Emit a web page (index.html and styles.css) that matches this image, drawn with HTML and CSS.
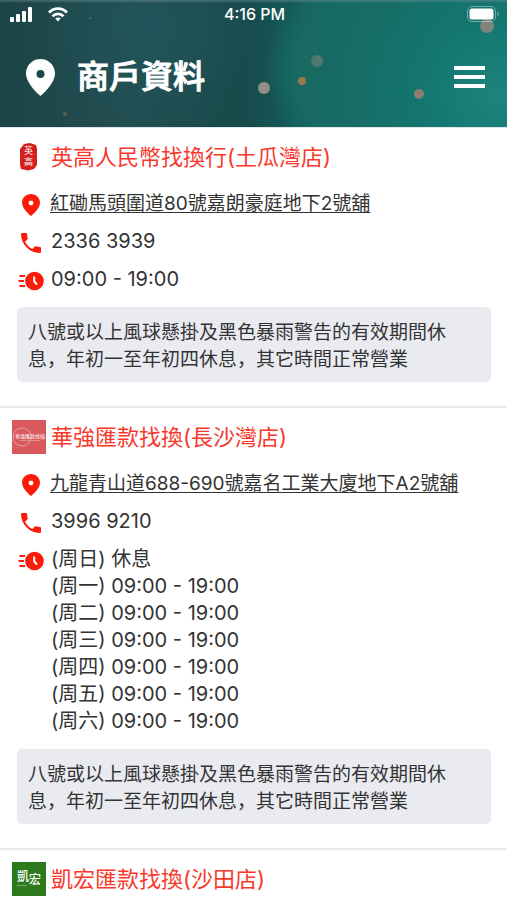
FILE: index.html
```html
<!DOCTYPE html>
<html lang="zh-CN">
<head>
  <meta charset="UTF-8">
  <meta name="viewport" content="width=device-width, initial-scale=1.0">
  <title>商戶資料</title>
  <link rel="stylesheet" href="styles.css">
</head>
<body>

<!-- shared icons -->
<svg class="sprite" aria-hidden="true">
  <symbol id="pin" viewBox="0 0 18 22">
    <path fill-rule="evenodd" d="M9 0C4 0 0 3.900 0 8.800 0 15.200 9 22 9 22s9-6.800 9-13.200C18 3.900 14 0 9 0zM9 6.600a2.400 2.400 0 1 1 0 4.800 2.400 2.400 0 0 1 0-4.800z"/>
  </symbol>
  <symbol id="phone" viewBox="3 3 18 18">
    <path d="M6.620 10.790c1.440 2.830 3.760 5.140 6.590 6.590l2.200-2.200c.27-.27.67-.36 1.020-.24 1.120.37 2.330.57 3.570.57.55 0 1 .45 1 1V20c0 .55-.45 1-1 1-9.390 0-17-7.610-17-17 0-.55.45-1 1-1h3.500c.55 0 1 .45 1 1 0 1.250.2 2.450.57 3.570.11.35.03.74-.25 1.020l-2.200 2.200z"/>
  </symbol>
  <symbol id="clock" viewBox="0 0 26 20">
    <circle cx="16.500" cy="10" r="9.300"/>
    <path d="M1.500 5H7M0.500 10H6M1.500 15H7" stroke="#fb1b0b" stroke-width="1.800"/>
    <path d="M16.200 5.500V10.500L19 13.500" fill="none" stroke="#fff" stroke-width="2"/>
  </symbol>
</svg>

<header class="header">
  <svg class="bokeh" viewBox="0 0 507 127" preserveAspectRatio="xMaxYMid slice" aria-hidden="true">
    <circle cx="264" cy="88" r="6" fill="#948c86"/>
    <circle cx="302" cy="81" r="4" fill="#9a7850"/>
    <circle cx="317" cy="61" r="6" fill="#507770"/>
    <circle cx="419" cy="94" r="5" fill="#8a7e6c"/>
    <circle cx="487" cy="26" r="7" fill="#7d8678"/>
    <circle cx="65" cy="114" r="2" fill="#56604a"/>
    <circle cx="90" cy="18" r="1" fill="#50706a"/>
  </svg>

  <div class="status-bar">
    <div class="status-left">
      <svg width="23" height="15" viewBox="0 0 23 15" fill="#fff" aria-hidden="true">
        <rect x="0" y="10" width="4" height="5" rx="1"/>
        <rect x="6" y="7" width="4" height="8" rx="1"/>
        <rect x="12" y="4" width="4" height="11" rx="1"/>
        <rect x="18" y="0" width="4" height="15" rx="1"/>
      </svg>
      <svg width="20" height="15" viewBox="0 0 20 15" fill="none" stroke="#fff" stroke-width="2.800" aria-hidden="true">
        <path d="M1 5.500C6 .4 14 .4 19 5.500"/>
        <path d="M4.500 9.200C7.600 6.200 12.400 6.200 15.500 9.200"/>
        <path d="M7.200 11.600C8.800 10.200 11.200 10.200 12.800 11.600L10 14.600z" fill="#fff" stroke="none"/>
      </svg>
    </div>
    <span class="status-time">4:16 PM</span>
    <div class="status-right">
      <svg width="32" height="16" viewBox="0 0 32 16" aria-hidden="true">
        <rect x="0.500" y="0.500" width="28" height="15" rx="4.500" fill="none" stroke="#fff" stroke-opacity=".4"/>
        <rect x="2.500" y="2.500" width="24" height="11" rx="2.500" fill="#fff"/>
        <path d="M30.500 5.500c1.500.8 1.500 4.200 0 5z" fill="#fff" fill-opacity=".5"/>
      </svg>
    </div>
  </div>

  <div class="nav">
    <svg class="nav-pin" viewBox="0 0 29 37" aria-hidden="true">
      <path fill-rule="evenodd" d="M14.500 0C6.500 0 0 6.300 0 14.500 0 25 14.500 37 14.500 37S29 25 29 14.500C29 6.300 22.500 0 14.500 0zM14.500 11a4 4 0 1 1 0 8 4 4 0 0 1 0-8z"/>
    </svg>
    <h1>商戶資料</h1>
    <button type="button" class="menu-btn" aria-label="選單">
      <span></span>
      <span></span>
      <span></span>
    </button>
  </div>
</header>

<main>
  <section class="shop">
    <div class="shop-head">
      <svg class="logo" viewBox="0 0 34 34" aria-hidden="true">
        <path d="M12 4L18 3 24 5 25 9V25L22 29 16 30.500 9 29 8 25V9z" fill="#d3201f"/>
        <text x="16.500" y="14" class="seal-text">英</text>
        <text x="16.500" y="25" class="seal-text">高</text>
      </svg>
      <h2>英高人民幣找換行(土瓜灣店)</h2>
    </div>
    <div class="row">
      <span class="icon"><svg width="18" height="22"><use href="#pin"/></svg></span>
      <a href="#" class="address">紅磡馬頭圍道80號嘉朗豪庭地下2號舖</a>
    </div>
    <div class="row">
      <span class="icon"><svg width="20" height="20"><use href="#phone"/></svg></span>
      <a href="tel:23363939" class="phone">2336 3939</a>
    </div>
    <div class="row">
      <span class="icon"><svg width="26" height="20"><use href="#clock"/></svg></span>
      <ul class="hours">
        <li>09:00 - 19:00</li>
      </ul>
    </div>
    <p class="notice">八號或以上風球懸掛及黑色暴雨警告的有效期間休息，年初一至年初四休息，其它時間正常營業</p>
  </section>

  <section class="shop">
    <div class="shop-head">
      <svg class="logo" viewBox="0 0 34 34" aria-hidden="true">
        <rect width="34" height="34" fill="#d9595d"/>
        <circle cx="10" cy="17" r="9" fill="none" stroke="#eeb0b0" stroke-width="0.800"/>
        <text x="18" y="18" class="brand-text">華強匯款找換</text>
        <path d="M8 20.500H28" stroke="#e79a9b" stroke-width="0.800"/>
      </svg>
      <h2>華強匯款找換(長沙灣店)</h2>
    </div>
    <div class="row">
      <span class="icon"><svg width="18" height="22"><use href="#pin"/></svg></span>
      <a href="#" class="address">九龍青山道688-690號嘉名工業大廈地下A2號舖</a>
    </div>
    <div class="row">
      <span class="icon"><svg width="20" height="20"><use href="#phone"/></svg></span>
      <a href="tel:39969210" class="phone">3996 9210</a>
    </div>
    <div class="row">
      <span class="icon"><svg width="26" height="20"><use href="#clock"/></svg></span>
      <ul class="hours">
        <li>(周日) 休息</li>
        <li>(周一) 09:00 - 19:00</li>
        <li>(周二) 09:00 - 19:00</li>
        <li>(周三) 09:00 - 19:00</li>
        <li>(周四) 09:00 - 19:00</li>
        <li>(周五) 09:00 - 19:00</li>
        <li>(周六) 09:00 - 19:00</li>
      </ul>
    </div>
    <p class="notice">八號或以上風球懸掛及黑色暴雨警告的有效期間休息，年初一至年初四休息，其它時間正常營業</p>
  </section>

  <section class="shop">
    <div class="shop-head">
      <svg class="logo" viewBox="0 0 34 34" aria-hidden="true">
        <rect width="34" height="34" fill="#2d7a1c"/>
        <text x="11" y="19" class="green-text">凱</text>
        <text x="23" y="22" class="green-text">宏</text>
        <path d="M5 23.500H15" stroke="#8db884" stroke-width="0.800"/>
      </svg>
      <h2>凱宏匯款找換(沙田店)</h2>
    </div>
  </section>
</main>

</body>
</html>
```
FILE: styles.css
```css
* {
  box-sizing: border-box;
}
body {
  margin: 0;
  background-color: #fff;
  color: #333;
  font-family: Inter, "Noto Sans CJK SC", sans-serif;
  font-size: 19px;
  line-height: 27px;
}
h1, h2, p, ul {
  margin: 0;
  padding: 0;
}
ul {
  list-style: none;
}
svg {
  display: block;
}
.sprite {
  display: none;
}

/* header */
.header {
  position: relative;
  padding-bottom: 26px;
  color: #fff;
  background:
    linear-gradient(rgba(120, 150, 150, 0.5), rgba(120, 150, 150, 0) 3px),
    radial-gradient(circle at 98% 75%, #1b847c 0, #14756f 80px, rgba(20, 117, 111, 0) 160px),
    radial-gradient(circle at 72% 55%, rgba(24, 107, 99, 0.9) 0, rgba(24, 107, 99, 0.9) 70px, rgba(24, 107, 99, 0) 100px),
    radial-gradient(circle at 30% 20%, #20545a 0, rgba(32, 84, 90, 0) 110px),
    linear-gradient(90deg, #1c4447 0%, #234e51 25%, #174a4b 48%, #12706b 70%, #146b66 100%);
  border-bottom: 1px solid #dfe6e8;
}
.bokeh {
  position: absolute;
  top: 0;
  left: 0;
  width: 100%;
  height: 100%;
}
.status-bar {
  position: relative;
  display: grid;
  grid-template-columns: 1fr auto 1fr;
  align-items: center;
  height: 28px;
  padding: 0 8px 0 10px;
}
.status-left {
  display: flex;
  gap: 15px;
}
.status-time {
  font-size: 16px;
  font-weight: 500;
}
.status-right {
  justify-self: end;
}
.nav {
  position: relative;
  display: flex;
  align-items: center;
  margin-top: 25px;
  padding: 0 22px 0 26px;
}
.nav-pin {
  width: 29px;
  height: 37px;
  fill: #fff;
}
h1 {
  flex: 1;
  margin-left: 22px;
  font-size: 32px;
  font-weight: 500;
  line-height: 48px;
  -webkit-text-stroke: 1px #fff;
}
.menu-btn {
  display: flex;
  flex-direction: column;
  gap: 5px;
  padding: 0;
  border: none;
  background: none;
  cursor: pointer;
}
.menu-btn span {
  width: 31px;
  height: 4px;
  background-color: #fff;
}

/* shop list */
.shop {
  padding: 12px 16px 24px 12px;
  border-bottom: 2px solid #e9eaed;
}
.shop:last-child {
  padding-bottom: 4px;
  border-bottom: none;
}
.shop-head {
  display: flex;
  align-items: center;
  gap: 5px;
  margin-bottom: 16px;
}
.shop:last-child .shop-head {
  margin-bottom: 0;
}
.logo {
  width: 34px;
  height: 34px;
}
.logo text {
  fill: #fff;
  text-anchor: middle;
}
.seal-text {
  font-size: 9px;
}
.brand-text {
  font-size: 5px;
}
.green-text {
  font-size: 12px;
  font-weight: 500;
}
h2 {
  color: #f8382c;
  font-size: 22px;
  font-weight: 400;
  line-height: 34px;
}
.row {
  display: flex;
  margin-bottom: 11px;
}
.icon {
  display: flex;
  align-items: center;
  justify-content: center;
  flex: none;
  width: 38px;
  height: 30px;
  margin-bottom: -3px;
  fill: #fb1b0b;
}
.row a {
  color: #333;
  text-decoration: none;
}
.row .address {
  text-decoration: underline;
  text-decoration-thickness: 1px;
  text-underline-offset: 2px;
}
.phone,
.hours {
  padding-left: 1px;
  font-size: 20px;
}
.notice {
  margin: 14px 0 0 5px;
  padding: 12px 11px 9px;
  border-radius: 5px;
  background-color: #eaebf1;
}
```
